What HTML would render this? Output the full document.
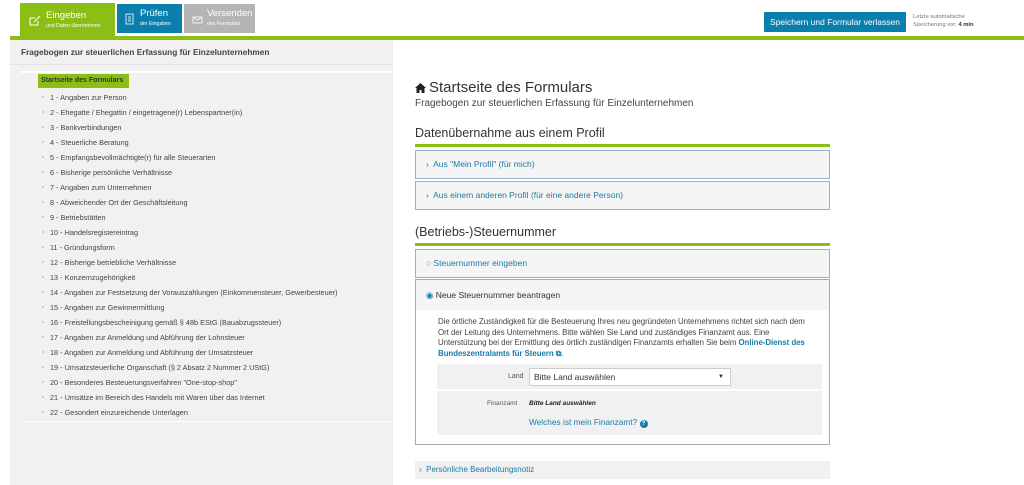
<!DOCTYPE html>
<html><head><meta charset="utf-8"><style>
*{box-sizing:border-box;margin:0;padding:0}
body{width:1024px;height:485px;overflow:hidden;background:#fff;font-family:"Liberation Sans",sans-serif;color:#333;position:relative}
.abs{position:absolute}
.tab{position:absolute;color:#fff;font-size:9px;line-height:10px;overflow:hidden}
.tab b{font-weight:normal;font-size:9.5px;display:block}
.tab small{font-size:5.2px;display:block}
.green{background:#8cbf16}
#side{left:10px;top:40px;width:383px;height:445px;background:#f1f1f1}
.item{position:absolute;left:50px;font-size:7.3px;color:#444;white-space:nowrap}
.item:before{content:"";position:absolute;left:-8px;top:3px;width:2px;height:2px;background:#ccc}
.h2{position:absolute;left:415px;font-size:12.5px;color:#333}
.line{position:absolute;left:415px;width:415px;height:3px;background:#8cbf16}
.box{position:absolute;left:415px;width:415px;border:1px solid #8ab8d0;background:#f5f5f5;font-size:8.5px;color:#1a7aa8;padding-left:10px}
</style></head><body>
<div class="tab green" style="left:20px;top:3px;width:95px;height:37px;padding:8px 0 0 9px">
<svg class="abs" style="left:9px;top:11px" width="12" height="12" viewBox="0 0 12 12" fill="none" stroke="#fff" stroke-width="1"><path d="M1 4h5M1 4v7h8V7M5 8l6-6"/></svg>
<div style="padding-left:17px"><b>Eingeben</b><small>und Daten übernehmen</small></div></div>
<div class="tab" style="left:117px;top:4px;width:65px;height:29px;background:#0a7fae;padding:5px 0 0 8px">
<svg class="abs" style="left:8px;top:9px" width="10" height="12" viewBox="0 0 10 12" fill="none" stroke="#cfe6f2" stroke-width="1"><rect x="1" y="1" width="7" height="10"/><path d="M3 4h3M3 6h3M3 8h3"/></svg>
<div style="padding-left:15px"><b>Prüfen</b><small>der Eingaben</small></div></div>
<div class="tab" style="left:184px;top:4px;width:71px;height:29px;background:#b5b5b5;padding:5px 0 0 8px">
<svg class="abs" style="left:8px;top:10px" width="11" height="10" viewBox="0 0 11 10" fill="none" stroke="#eee" stroke-width="1"><rect x="1" y="3" width="9" height="6"/><path d="M1 3l4.5 3L10 3"/></svg>
<div style="padding-left:15px"><b>Versenden</b><small>des Formulars</small></div></div>
<div class="abs" style="left:764px;top:12px;width:142px;height:20px;background:#0a7fae;color:#fff;font-size:8.5px;text-align:center;line-height:20px;border-radius:1px">Speichern und Formular verlassen</div>
<div class="abs" style="left:913px;top:13px;font-size:5.8px;color:#777;line-height:8px">Letzte automatische<br>Speicherung vor: <b style="color:#333">4 min</b></div>
<div class="abs green" style="left:10px;top:36px;width:1014px;height:4px"></div>
<div id="side" class="abs">
<div class="abs" style="left:11px;top:7px;font-size:8.3px;color:#444;font-weight:bold">Fragebogen zur steuerlichen Erfassung für Einzelunternehmen</div>
<div class="abs" style="left:0;top:24px;width:383px;height:1px;background:#e2e2e2"></div>
<div class="abs" style="left:11px;top:31px;width:370px;height:2px;background:#fff"></div>
<div class="abs green" style="left:28px;top:34px;width:91px;height:14px;font-size:7px;font-weight:bold;color:#333;line-height:14px;padding-left:3px">Startseite des Formulars</div>
<div class="abs" style="left:11px;top:381px;width:370px;height:1px;background:#fff"></div>
</div>
<div class="item" style="top:93px">1 - Angaben zur Person</div>
<div class="item" style="top:108px">2 - Ehegatte / Ehegattin / eingetragene(r) Lebenspartner(in)</div>
<div class="item" style="top:123px">3 - Bankverbindungen</div>
<div class="item" style="top:138px">4 - Steuerliche Beratung</div>
<div class="item" style="top:153px">5 - Empfangsbevollmächtigte(r) für alle Steuerarten</div>
<div class="item" style="top:168px">6 - Bisherige persönliche Verhältnisse</div>
<div class="item" style="top:183px">7 - Angaben zum Unternehmen</div>
<div class="item" style="top:198px">8 - Abweichender Ort der Geschäftsleitung</div>
<div class="item" style="top:213px">9 - Betriebstätten</div>
<div class="item" style="top:228px">10 - Handelsregistereintrag</div>
<div class="item" style="top:243px">11 - Gründungsform</div>
<div class="item" style="top:258px">12 - Bisherige betriebliche Verhältnisse</div>
<div class="item" style="top:273px">13 - Konzernzugehörigkeit</div>
<div class="item" style="top:288px">14 - Angaben zur Festsetzung der Vorauszahlungen (Einkommensteuer, Gewerbesteuer)</div>
<div class="item" style="top:303px">15 - Angaben zur Gewinnermittlung</div>
<div class="item" style="top:318px">16 - Freistellungsbescheinigung gemäß § 48b EStG (Bauabzugssteuer)</div>
<div class="item" style="top:333px">17 - Angaben zur Anmeldung und Abführung der Lohnsteuer</div>
<div class="item" style="top:348px">18 - Angaben zur Anmeldung und Abführung der Umsatzsteuer</div>
<div class="item" style="top:363px">19 - Umsatzsteuerliche Organschaft (§ 2 Absatz 2 Nummer 2 UStG)</div>
<div class="item" style="top:378px">20 - Besonderes Besteuerungsverfahren "One-stop-shop"</div>
<div class="item" style="top:393px">21 - Umsätze im Bereich des Handels mit Waren über das Internet</div>
<div class="item" style="top:408px">22 - Gesondert einzureichende Unterlagen</div>

<svg class="abs" style="left:415px;top:83px" width="11" height="10" viewBox="0 0 11 10"><path d="M5.5 0L0 5h1.5v5h3V7h2v3h3V5H11z" fill="#222"/></svg>
<div class="abs" style="left:429px;top:79px;font-size:15px;color:#333">Startseite des Formulars</div>
<div class="abs" style="left:415px;top:98px;font-size:10px;color:#444">Fragebogen zur steuerlichen Erfassung für Einzelunternehmen</div>
<div class="h2" style="top:126px">Datenübernahme aus einem Profil</div>
<div class="line" style="top:144px"></div>
<div class="box" style="top:150px;height:29px;line-height:27px">›&nbsp; Aus "Mein Profil" (für mich)</div>
<div class="box" style="top:181px;height:29px;line-height:27px">›&nbsp; Aus einem anderen Profil (für eine andere Person)</div>
<div class="h2" style="top:225px">(Betriebs-)Steuernummer</div>
<div class="line" style="top:243px"></div>
<div class="box" style="top:249px;height:29px;line-height:27px"><span style="color:#888">○</span> Steuernummer eingeben</div>
<div class="abs" style="left:415px;top:279px;width:415px;height:166px;border:1px solid #aaa;background:#fff">
<div style="background:#f5f5f5;height:30px;line-height:30px;padding-left:10px;font-size:8.5px;color:#333"><span style="color:#1a7aa8">◉</span> Neue Steuernummer beantragen</div>
<div style="position:absolute;left:22px;top:37px;width:376px;font-size:7.9px;line-height:10.7px;color:#444;letter-spacing:-0.05px">Die örtliche Zuständigkeit für die Besteuerung Ihres neu gegründeten Unternehmens richtet sich nach dem Ort der Leitung des Unternehmens. Bitte wählen Sie Land und zuständiges Finanzamt aus. Eine Unterstützung bei der Ermittlung des örtlich zuständigen Finanzamts erhalten Sie beim <b style="color:#1a7aa8">Online-Dienst des Bundeszentralamts für Steuern ⧉</b>.</div>
<div style="position:absolute;left:21px;top:84px;width:385px;height:25px;background:#f1f1f1"></div>
<div style="position:absolute;left:92px;top:93px;font-size:7px;color:#555">Land</div>
<div style="position:absolute;left:113px;top:88px;width:202px;height:18px;background:#fff;border:1px solid #ccc;font-size:8.5px;line-height:16px;padding-left:4px;color:#333">Bitte Land auswählen<span style="position:absolute;right:6px;font-size:6px">▼</span></div>
<div style="position:absolute;left:21px;top:111px;width:385px;height:44px;background:#f1f1f1"></div>
<div style="position:absolute;left:71px;top:120px;font-size:6.5px;color:#555">Finanzamt</div>
<div style="position:absolute;left:113px;top:120px;font-size:6.5px;font-weight:bold;font-style:italic;color:#222">Bitte Land auswählen</div>
<div style="position:absolute;left:113px;top:137px;font-size:8.3px;color:#1a7aa8">Welches ist mein Finanzamt? <span style="display:inline-block;width:8px;height:8px;border-radius:50%;background:#1a7aa8;color:#fff;font-size:6px;line-height:8px;text-align:center;font-weight:bold">?</span></div>
</div>
<div class="abs" style="left:415px;top:461px;width:415px;height:18px;background:#f1f1f1;font-size:8px;line-height:17px;color:#1a7aa8;padding-left:4px">›&nbsp; Persönliche Bearbeitungsnotiz</div>
</body></html>
